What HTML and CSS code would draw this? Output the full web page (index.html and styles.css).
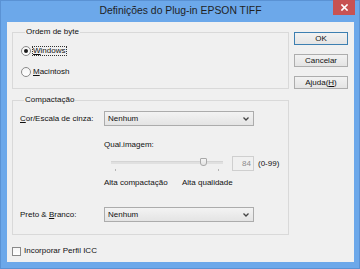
FILE: index.html
```html
<!DOCTYPE html>
<html lang="pt">
<head>
<meta charset="utf-8">
<title>Definições do Plug-in EPSON TIFF</title>
<link rel="stylesheet" href="styles.css">
</head>
<body>
<div class="frame">
  <div class="titlebar">
    <div class="title">Definições do Plug-in EPSON TIFF</div>
    <div class="close">
      <svg width="7" height="7" viewBox="0 0 7 7"><path d="M1 1L6 6M6 1L1 6" stroke="#fff" stroke-width="1.6" stroke-linecap="square"/></svg>
    </div>
  </div>
  <div class="client">
    <div class="main">
      <fieldset class="group group-byte">
        <legend>Ordem de byte</legend>
        <div class="radio-row">
          <span class="radio checked"></span>
          <span class="rlabel focus"><u>W</u>indows</span>
        </div>
        <div class="radio-row">
          <span class="radio"></span>
          <span class="rlabel"><u>M</u>acintosh</span>
        </div>
      </fieldset>

      <fieldset class="group group-comp">
        <legend>Compactação</legend>
        <div class="field-row">
          <span class="flabel"><u>C</u>or/Escala de cinza:</span>
          <div class="select">
            <span>Nenhum</span>
            <svg width="6" height="4" viewBox="0 0 6 4"><path d="M0.5 0.5L3 3L5.5 0.5" fill="none" stroke="#444" stroke-width="1.3"/></svg>
          </div>
        </div>
        <div class="quality">
          <div class="qlabel">Qual.imagem:</div>
          <div class="slider-row">
            <div class="slider">
              <div class="track"></div>
              <div class="thumb"></div>
              <div class="ticks"><span class="tick"></span><span class="tick"></span></div>
            </div>
            <div class="numbox">84</div>
            <span class="range">(0-99)</span>
          </div>
          <div class="ends">
            <span class="end-left">Alta compactação</span>
            <span>Alta qualidade</span>
          </div>
        </div>
        <div class="field-row field-bw">
          <span class="flabel">Preto &amp; <u>B</u>ranco:</span>
          <div class="select">
            <span>Nenhum</span>
            <svg width="6" height="4" viewBox="0 0 6 4"><path d="M0.5 0.5L3 3L5.5 0.5" fill="none" stroke="#444" stroke-width="1.3"/></svg>
          </div>
        </div>
      </fieldset>

      <div class="check-row">
        <span class="checkbox"></span>
        <span>Incorporar Perfil ICC</span>
      </div>
    </div>
    <div class="buttons">
      <div class="btn default">OK</div>
      <div class="btn">Cancelar</div>
      <div class="btn">Ajuda(<u>H</u>)</div>
    </div>
  </div>
</div>
</body>
</html>
```
FILE: styles.css
```css
* { box-sizing: border-box; }
html, body { margin: 0; padding: 0; }
body {
  width: 360px;
  height: 269px;
  overflow: hidden;
  font-family: "Liberation Sans", Arial, sans-serif;
  font-size: 8px;
  line-height: 10px;
  color: #111;
}
u { text-decoration: underline; text-underline-offset: 1px; }

.frame {
  width: 360px;
  height: 269px;
  background: #6ca8ea;
  box-shadow: inset 0 0 0 1px #5a92d4;
  padding: 0 6px 7px 7px;
  display: flex;
  flex-direction: column;
}
.titlebar {
  height: 22px;
  display: grid;
  grid-template-columns: 1fr auto 1fr;
  align-items: start;
}
.title {
  grid-column: 2;
  font-size: 10.4px;
  line-height: 22px;
  color: #1f1f1f;
  white-space: nowrap;
}
.close {
  grid-column: 3;
  justify-self: end;
  width: 22px;
  height: 15px;
  margin-right: -1px;
  background: #c85252;
  display: flex;
  align-items: center;
  justify-content: center;
}

.client {
  flex: 1;
  background: #f0f0f0;
  display: flex;
  gap: 5px;
  padding: 5px 0 0 5px;
}
.main {
  width: 277px;
  display: flex;
  flex-direction: column;
}

.group {
  margin: 0;
  padding: 0;
  border: 1px solid #d9d9d9;
  min-width: 0;
}
.group legend {
  margin-left: 4px;
  padding: 0 1px;
  line-height: 10px;
  font-size: 8px;
}
.group-byte {
  padding: 8px 0 10px 8px;
  display: flex;
  flex-direction: column;
  gap: 9px;
}
.radio-row {
  height: 12px;
  display: flex;
  align-items: center;
  gap: 1px;
}
.radio {
  width: 10px;
  height: 10px;
  border-radius: 50%;
  border: 1px solid #8a8a8a;
  background: linear-gradient(#f4f4f4, #ffffff);
  display: flex;
  align-items: center;
  justify-content: center;
}
.radio.checked::after {
  content: "";
  width: 4px;
  height: 4px;
  border-radius: 50%;
  background: #1a1a1a;
}
.rlabel {
  border: 1px dotted transparent;
  padding: 0 1px 0 0;
  line-height: 8px;
}
.rlabel.focus { border-color: #333; }

.group-comp {
  margin-top: 6px;
  padding: 6px 0 12px 7px;
}
.field-row {
  display: flex;
  align-items: center;
  height: 15px;
}
.flabel { width: 84px; }
.select {
  width: 150px;
  height: 15px;
  border: 1px solid #acacac;
  background: linear-gradient(#f3f3f3, #e4e4e4);
  display: flex;
  align-items: center;
  justify-content: space-between;
  padding: 0 4px 0 3px;
}

.quality {
  margin-left: 84px;
  margin-top: 14px;
}
.slider-row {
  margin-top: 6px;
  height: 15px;
  display: flex;
  align-items: flex-start;
}
.slider {
  position: relative;
  width: 128px;
  height: 15px;
  padding: 5px 0 0 7px;
}
.track {
  width: 112px;
  height: 3px;
  background: #e0e0e0;
  border-top: 1px solid #d4d4d4;
}
.thumb {
  position: absolute;
  left: 96px;
  top: 2px;
  width: 7px;
  height: 8px;
  background: linear-gradient(#f4f4f4, #e2e2e2);
  border: 1px solid #a9a9a9;
  border-radius: 1px 1px 3px 3px;
}
.ticks {
  width: 112px;
  margin-top: 5px;
  padding: 0 4px;
  display: flex;
  justify-content: space-between;
}
.tick {
  width: 1px;
  height: 2px;
  background: #b5b5b5;
}
.numbox {
  width: 22px;
  height: 15px;
  border: 1px solid #cfcfcf;
  background: #f0f0f0;
  color: #8c8c8c;
  text-align: right;
  padding-right: 2px;
  line-height: 13px;
}
.range {
  margin-left: 4px;
  line-height: 15px;
}
.ends {
  margin-top: 7px;
  display: flex;
}
.end-left { width: 78px; }
.field-bw { margin-top: 19px; }

.check-row {
  margin-top: 11px;
  height: 10px;
  display: flex;
  align-items: center;
  gap: 3px;
}
.checkbox {
  width: 9px;
  height: 9px;
  border: 1px solid #8a8a8a;
  background: linear-gradient(#f6f6f6, #ffffff);
}

.buttons {
  width: 54px;
  padding-top: 5px;
  display: flex;
  flex-direction: column;
  gap: 9px;
}
.btn {
  height: 13px;
  border: 1px solid #adadad;
  background: linear-gradient(#f2f2f2, #e4e4e4);
  text-align: center;
  line-height: 11px;
}
.btn.default { border-color: #3c7fb1; }
```
